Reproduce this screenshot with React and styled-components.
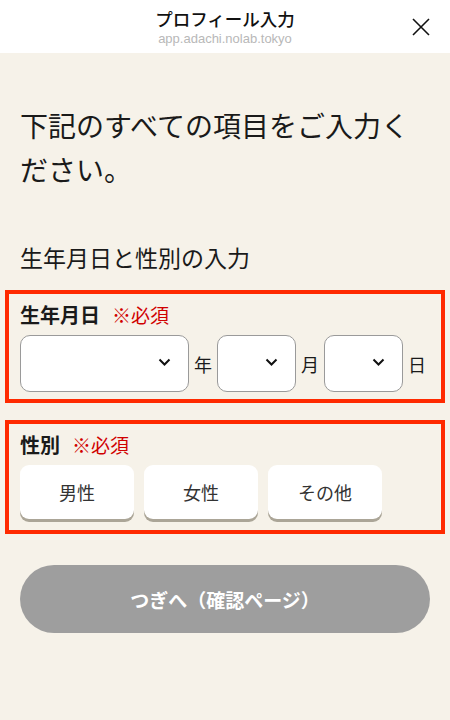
import styled, { createGlobalStyle } from "styled-components"

const GlobalStyle = createGlobalStyle`
  body {
    margin: 0;
    background: #f6f2e9;
    font-family: "Noto Sans CJK JP", "Noto Sans", sans-serif;
    color: #1a1a1a;
  }
`

const Header = styled.header`
  height: 53px;
  background: #ffffff;
  position: relative;
  display: flex;
  flex-direction: column;
  align-items: center;
  justify-content: center;

  .title {
    font-size: 17.5px;
    font-weight: 500;
    line-height: 22px;
    margin-top: 1px;
    color: #111;
  }
  .url {
    font-family: "Liberation Sans", Arial, sans-serif;
    font-size: 13px;
    line-height: 17px;
    color: #b8b8b8;
  }
  .close {
    position: absolute;
    right: 20px;
    top: 18px;
  }
`

const Main = styled.main`
  padding: 50px 20px 40px;
`

const Lead = styled.h1`
  margin: 0;
  font-size: 28px;
  line-height: 44px;
  font-weight: 400;
`

const SubTitle = styled.h2`
  margin: 49px 0 0;
  font-size: 23px;
  line-height: 34px;
  font-weight: 400;
`

const FieldBox = styled.section`
  margin: ${(p) => p.$top}px -15px 0;
  border: 4px solid #ff2a00;
  padding: 8px 11px ${(p) => p.$bottom}px;
`

const Label = styled.div`
  font-size: 20px;
  line-height: 26px;
  font-weight: 700;
  display: flex;
  align-items: center;
  gap: 12px;

  span {
    color: #d00000;
    font-weight: 400;
    font-size: 19px;
  }
`

const Row = styled.div`
  margin-top: 7px;
  display: flex;
  align-items: center;
  gap: ${(p) => p.$gap}px;
`

const SelectWrap = styled.div`
  position: relative;
  flex: none;
  width: ${(p) => p.$width}px;

  select {
    appearance: none;
    width: 100%;
    height: 57px;
    box-sizing: border-box;
    border: 1px solid #9a9a9a;
    border-radius: 10px;
    background: #fff;
    font-size: 18px;
  }
  svg {
    position: absolute;
    right: 18px;
    top: 23px;
    pointer-events: none;
  }
`

const Unit = styled.span`
  font-size: 18px;
  line-height: 26px;
  width: 18px;
  flex: none;
`

const Choice = styled.button`
  width: 114px;
  height: 54px;
  margin-bottom: 3px;
  border: none;
  border-radius: 9px;
  background: #fff;
  box-shadow: 0 3px 0 #aba597;
  font-family: inherit;
  font-size: 18px;
  color: #333;
`

const Submit = styled.button`
  display: block;
  width: 100%;
  height: 68px;
  margin-top: 31px;
  border: none;
  border-radius: 34px;
  background: #9e9e9e;
  color: #fff;
  font-family: inherit;
  font-size: 19px;
  font-weight: 700;
`

const Chevron = () => (
  <svg width="13" height="9" viewBox="0 0 13 9">
    <path d="M1.5 1.5 L6.5 6.5 L11.5 1.5" fill="none" stroke="#111" strokeWidth="2" />
  </svg>
)

const DateSelect = ({ width }) => (
  <SelectWrap $width={width}>
    <select defaultValue="">
      <option value=""></option>
    </select>
    <Chevron />
  </SelectWrap>
)

export default function App() {
  return (
    <>
      <GlobalStyle />
      <Header>
        <div className="title">プロフィール入力</div>
        <div className="url">app.adachi.nolab.tokyo</div>
        <svg className="close" width="18" height="18" viewBox="0 0 18 18">
          <path d="M1 1 L17 17 M17 1 L1 17" stroke="#111" strokeWidth="1.6" />
        </svg>
      </Header>
      <Main>
        <Lead>下記のすべての項目をご入力ください。</Lead>
        <SubTitle>生年月日と性別の入力</SubTitle>

        <FieldBox $top={16} $bottom={7}>
          <Label>生年月日<span>※必須</span></Label>
          <Row $gap={5}>
            <DateSelect width={169} />
            <Unit>年</Unit>
            <DateSelect width={79} />
            <Unit>月</Unit>
            <DateSelect width={79} />
            <Unit>日</Unit>
          </Row>
        </FieldBox>

        <FieldBox $top={17} $bottom={8}>
          <Label>性別<span>※必須</span></Label>
          <Row $gap={10}>
            <Choice>男性</Choice>
            <Choice>女性</Choice>
            <Choice>その他</Choice>
          </Row>
        </FieldBox>

        <Submit>つぎへ（確認ページ）</Submit>
      </Main>
    </>
  )
}
